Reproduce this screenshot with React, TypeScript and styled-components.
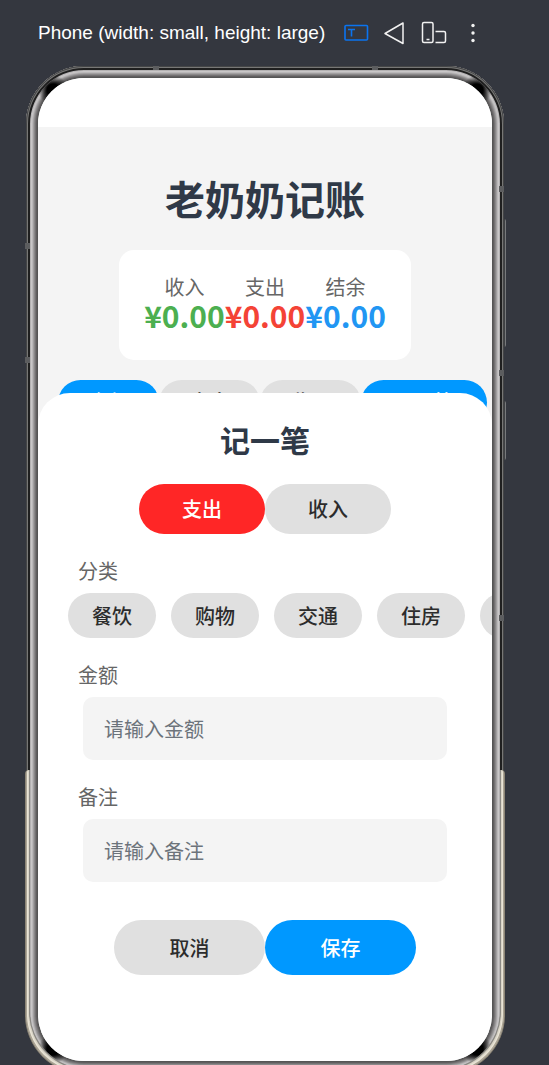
import React, { useState } from 'react';
import styled, { createGlobalStyle } from 'styled-components';

const GlobalStyle = createGlobalStyle`
  * { box-sizing: border-box; }
  body {
    margin: 0;
    background: #34373f;
    font-family: "Noto Sans CJK SC", "Noto Sans", sans-serif;
  }
  button, input { font-family: inherit; }
`;

const Page = styled.div`
  display: flex;
  flex-direction: column;
  height: 100vh;
  min-height: 940px;
  overflow: hidden;
  background: #34373f;
`;

const Toolbar = styled.header`
  flex: none;
  display: flex;
  align-items: center;
  height: 66px;
  padding: 0 0 0 38px;
`;

const DeviceName = styled.span`
  margin-right: 17px;
  color: #fff;
  font: 19px/24px "Liberation Sans", Arial, sans-serif;
  white-space: nowrap;
`;

const ToolButton = styled.button<{ $color?: string }>`
  flex: none;
  display: flex;
  align-items: center;
  justify-content: center;
  width: 28px;
  height: 28px;
  margin-right: 11px;
  padding: 0;
  border: 0;
  background: none;
  color: ${(p) => p.$color ?? '#f2f2f2'};
`;

const Device = styled.main`
  position: relative;
  flex: 1;
  display: flex;
  margin: 0 45px -8px 26px;
  padding: 12px;
  border-radius: 58px;
  background: #555;
  box-shadow:
    inset 0 0 0 1px #444546,
    inset 0 0 0 2px #777776,
    inset 0 0 0 4px #1f1f1f,
    inset 0 0 0 5px #b4b2b3,
    inset 0 0 0 6px #c9c7c8,
    inset 0 0 0 7px #bab8b9,
    inset 0 0 0 8px #a19fa0,
    inset 0 0 0 9px #8a8889,
    inset 0 0 0 10px #747273,
    inset 0 0 0 11px #605e5f;
`;

const CornerShade = styled.div`
  position: absolute;
  inset: 4px;
  border-radius: 54px;
  background:
    radial-gradient(circle at 23px 20px, #000 6px, transparent 15px),
    radial-gradient(circle at calc(100% - 23px) 20px, #000 6px, transparent 15px),
    radial-gradient(circle at 23px calc(100% - 20px), #000 6px, transparent 15px),
    radial-gradient(circle at calc(100% - 23px) calc(100% - 20px), #000 6px, transparent 15px);
  pointer-events: none;
`;

const MetalTrim = styled.div`
  position: absolute;
  left: -1px;
  right: -1px;
  bottom: -1px;
  height: 304px;
  border-radius: 4px 4px 59px 59px;
  border: solid #8b8475;
  border-width: 0 1px 1px;
  box-shadow:
    inset 1px -1px 0 #aaa394, inset -1px -1px 0 #aaa394,
    inset 2px -2px 0 #e9e4d6, inset -2px -2px 0 #e9e4d6,
    inset 3px -3px 0 #d9d4c6, inset -3px -3px 0 #d9d4c6,
    inset 4px -4px 0 #8b8984, inset -4px -4px 0 #8b8984;
  pointer-events: none;
`;

const SideKey = styled.div<{ $top: number; $length: number }>`
  position: absolute;
  right: -2px;
  top: ${(p) => p.$top}px;
  width: 2px;
  height: ${(p) => p.$length}px;
  border-radius: 0 2px 2px 0;
  background: #77797b;
  border-left: 1px solid #3f4144;
`;

const AntennaBand = styled.div<{ $side: 'left' | 'right' | 'top'; $at: string }>`
  position: absolute;
  background: #5c5d5f;
  ${(p) =>
    p.$side === 'top'
      ? `top: 0; left: ${p.$at}; width: 6px; height: 4px;`
      : `${p.$side}: ${p.$side === 'left' ? '-1px' : '0'}; top: ${p.$at}; width: 5px; height: 6px;`}
`;

const Screen = styled.div`
  position: relative;
  flex: 1;
  min-width: 0;
  overflow: hidden;
  border-radius: 46px;
  background: #f4f4f4;
`;

const StatusBar = styled.div`
  height: 49px;
  background: #fff;
`;

const Home = styled.section`
  display: flex;
  flex-direction: column;
  align-items: center;
  gap: 20px;
  padding-top: 41px;
`;

const AppTitle = styled.h1`
  margin: 0 0 2px;
  color: #2f3947;
  font-size: 40px;
  font-weight: 700;
  line-height: 60px;
`;

const Summary = styled.div`
  display: flex;
  height: 110px;
  padding: 23px 25px;
  border-radius: 15px;
  background: #fff;
`;

const Total = styled.div<{ $color: string }>`
  display: flex;
  flex-direction: column;
  align-items: center;
  color: #666;
  font-size: 20px;
  line-height: 28px;

  strong {
    color: ${(p) => p.$color};
    font-size: 30px;
    font-weight: 700;
    line-height: 28px;
  }
`;

const Filters = styled.div`
  display: flex;
  align-self: stretch;
  padding-left: 20px;
`;

const Pill = styled.button<{ $width: number; $height: number; $tone?: 'blue' | 'red' }>`
  flex: none;
  width: ${(p) => p.$width}px;
  height: ${(p) => p.$height}px;
  padding: 0;
  border: 0;
  border-radius: 28px;
  background: ${(p) => (p.$tone === 'blue' ? '#0098ff' : p.$tone === 'red' ? '#ff2626' : '#e0e0e0')};
  color: ${(p) => (p.$tone ? '#fff' : '#2c2c2c')};
  font-size: 20px;
  font-weight: 500;
  line-height: 28px;
`;

const FilterPill = styled(Pill)`
  padding-bottom: 1px;
`;

const Sheet = styled.form`
  position: absolute;
  top: 315px;
  right: 0;
  bottom: 0;
  left: 0;
  display: flex;
  flex-direction: column;
  padding-top: 26px;
  border-radius: 32px 32px 0 0;
  background: #fff;
`;

const SheetTitle = styled.h2`
  margin: 0 0 25px;
  color: #2f3947;
  font-size: 30px;
  font-weight: 700;
  line-height: 40px;
  text-align: center;
`;

const ButtonPair = styled.div`
  display: flex;
  justify-content: center;
`;

const Field = styled.div`
  display: flex;
  flex-direction: column;
  gap: 8px;
  margin-top: 23px;
`;

const FieldLabel = styled.label`
  padding-left: 40px;
  color: #666;
  font-size: 20px;
  line-height: 28px;
`;

const Chips = styled.div`
  display: flex;
  gap: 15px;
  overflow: hidden;
  padding-left: 30px;
`;

const TextInput = styled.input`
  height: 63px;
  margin: 0 45px;
  padding: 0 21px;
  border: 0;
  border-radius: 10px;
  background: #f4f4f4;
  color: #2c2c2c;
  font-size: 20px;
  outline: none;
  min-width: 0;

  &::placeholder { color: #6c737b; opacity: 1; }
`;

const Actions = styled(ButtonPair)`
  margin-top: 38px;
`;

const totals = [
  { label: '收入', color: '#4caf50' },
  { label: '支出', color: '#f44336' },
  { label: '结余', color: '#2196f3' },
];

const categories = ['餐饮', '购物', '交通', '住房', '娱乐'];

export default function App() {
  const [kind, setKind] = useState('支出');

  return (
    <Page>
      <GlobalStyle />
      <Toolbar>
        <DeviceName>Phone (width: small, height: large)</DeviceName>
        <ToolButton $color="#0a74f0" aria-label="Text size">
          <svg width="26" height="18" viewBox="0 0 26 18" fill="none" stroke="currentColor" strokeWidth="1.6">
            <rect x="2" y="1.5" width="22.5" height="14.5" rx="1" />
            <path d="M5 5.500h7M8.500 5.500v7" />
          </svg>
        </ToolButton>
        <ToolButton aria-label="Back">
          <svg width="24" height="26" viewBox="0 0 24 26" fill="none" stroke="currentColor" strokeWidth="1.5" strokeLinejoin="round">
            <path d="M20 3v20.500L2 13.500Z" />
          </svg>
        </ToolButton>
        <ToolButton aria-label="Switch device">
          <svg width="26" height="24" viewBox="0 0 26 24" fill="none" stroke="currentColor" strokeWidth="1.5">
            <rect x="1.5" y="1.5" width="10.5" height="20" rx="1.5" />
            <path d="M5.5 18.5h3M14.500 10.500H23a1.500 1.500 0 0 1 1.500 1.500v8a1.500 1.500 0 0 1-1.500 1.500h-8.500" />
          </svg>
        </ToolButton>
        <ToolButton aria-label="More">
          <svg width="6" height="20" viewBox="0 0 6 20" fill="currentColor">
            <circle cx="3" cy="2.500" r="1.700" />
            <circle cx="3" cy="10" r="1.700" />
            <circle cx="3" cy="17.500" r="1.700" />
          </svg>
        </ToolButton>
      </Toolbar>

      <Device>
        <CornerShade />
        <AntennaBand $side="top" $at="127px" />
        <AntennaBand $side="top" $at="346px" />
        <AntennaBand $side="left" $at="177px" />
        <AntennaBand $side="left" $at="291px" />
        <AntennaBand $side="right" $at="120px" />
        <AntennaBand $side="right" $at="304px" />
        <AntennaBand $side="right" $at="549px" />
        <SideKey $top={153} $length={128} />
        <SideKey $top={335} $length={59} />
        <MetalTrim />
        <Screen>
          <StatusBar />
          <Home>
            <AppTitle>老奶奶记账</AppTitle>
            <Summary>
              {totals.map((t) => (
                <Total key={t.label} $color={t.color}>
                  {t.label}
                  <strong>¥0.00</strong>
                </Total>
              ))}
            </Summary>
            <Filters>
              <FilterPill $width={101} $height={45} $tone="blue">全部</FilterPill>
              <FilterPill $width={101} $height={45}>支出</FilterPill>
              <FilterPill $width={101} $height={45}>收入</FilterPill>
              <FilterPill $width={126} $height={45} $tone="blue">记一笔</FilterPill>
            </Filters>
          </Home>

          <Sheet onSubmit={(e) => e.preventDefault()}>
            <SheetTitle>记一笔</SheetTitle>
            <ButtonPair>
              {['支出', '收入'].map((k) => (
                <Pill
                  key={k}
                  type="button"
                  $width={126}
                  $height={50}
                  $tone={kind === k ? 'red' : undefined}
                  onClick={() => setKind(k)}
                >
                  {k}
                </Pill>
              ))}
            </ButtonPair>
            <Field role="group" aria-labelledby="category">
              <FieldLabel as="span" id="category">分类</FieldLabel>
              <Chips>
                {categories.map((c) => (
                  <Pill key={c} type="button" $width={88} $height={45}>{c}</Pill>
                ))}
              </Chips>
            </Field>
            <Field>
              <FieldLabel htmlFor="amount">金额</FieldLabel>
              <TextInput id="amount" placeholder="请输入金额" />
            </Field>
            <Field>
              <FieldLabel htmlFor="note">备注</FieldLabel>
              <TextInput id="note" placeholder="请输入备注" />
            </Field>
            <Actions>
              <Pill type="button" $width={151} $height={55}>取消</Pill>
              <Pill type="submit" $width={151} $height={55} $tone="blue">保存</Pill>
            </Actions>
          </Sheet>
        </Screen>
      </Device>
    </Page>
  );
}
